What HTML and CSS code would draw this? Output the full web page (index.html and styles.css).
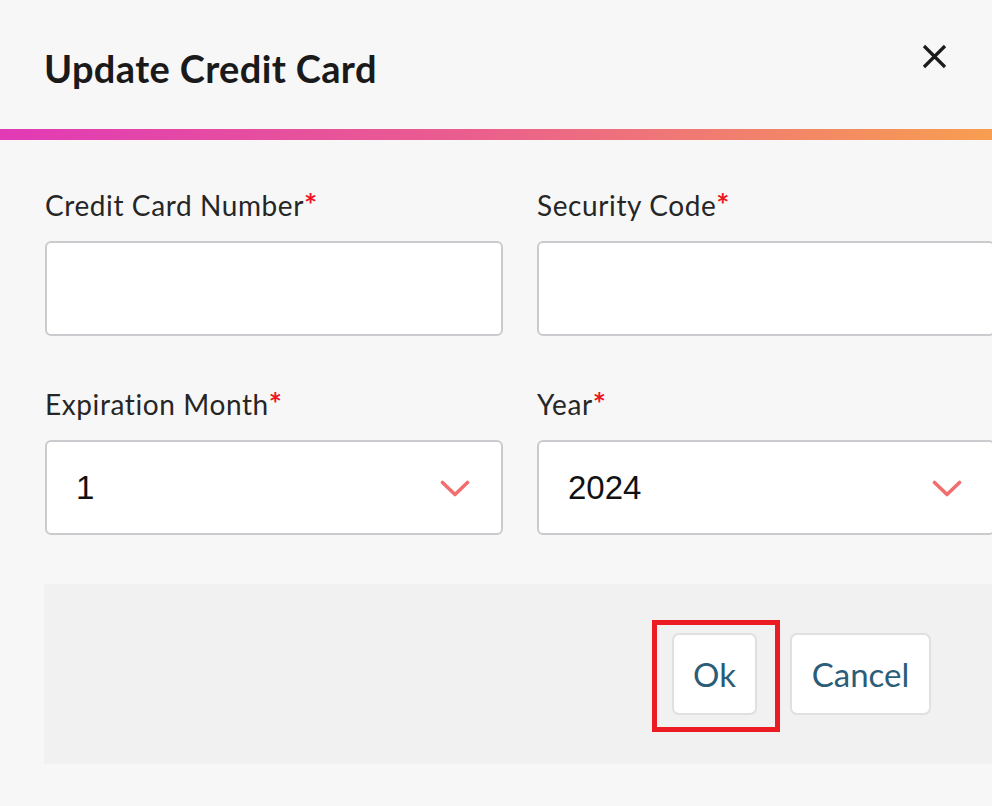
FILE: index.html
```html
<!DOCTYPE html>
<html lang="en">
<head>
<meta charset="utf-8">
<title>Update Credit Card</title>
<link rel="stylesheet" href="styles.css">
</head>
<body>
<div class="dialog">
  <header class="dialog-header">
    <h1 class="dialog-title">Update Credit Card</h1>
    <button class="close-btn" aria-label="Close">
      <svg viewBox="0 0 25 25" width="25" height="25"><path d="M2 2 L23 23 M23 2 L2 23" stroke="#1b1b1b" stroke-width="3.2" fill="none"/></svg>
    </button>
  </header>
  <div class="accent-bar"></div>
  <form class="dialog-body">
    <div class="field-grid">
      <div class="field">
        <label class="field-label">Credit Card Number<span class="req">*</span></label>
        <div class="input"></div>
      </div>
      <div class="field">
        <label class="field-label">Security Code<span class="req">*</span></label>
        <div class="input"></div>
      </div>
      <div class="field">
        <label class="field-label">Expiration Month<span class="req">*</span></label>
        <div class="input select">
          <span class="select-value">1</span>
          <svg class="chevron" viewBox="0 0 30 18" width="30" height="18"><path d="M2.5 2.5 L15 14.5 L27.5 2.5" stroke="#f26d6d" stroke-width="3.6" fill="none" stroke-linecap="round" stroke-linejoin="round"/></svg>
        </div>
      </div>
      <div class="field">
        <label class="field-label">Year<span class="req">*</span></label>
        <div class="input select">
          <span class="select-value">2024</span>
          <svg class="chevron" viewBox="0 0 30 18" width="30" height="18"><path d="M2.5 2.5 L15 14.5 L27.5 2.5" stroke="#f26d6d" stroke-width="3.6" fill="none" stroke-linecap="round" stroke-linejoin="round"/></svg>
        </div>
      </div>
    </div>
    <div class="dialog-footer">
      <div class="btn-wrap">
        <button type="button" class="btn">Ok</button>
        <span class="highlight"></span>
      </div>
      <button type="button" class="btn btn-cancel">Cancel</button>
    </div>
  </form>
</div>
</body>
</html>
```
FILE: styles.css
```css
html, body {
  margin: 0;
  padding: 0;
}
body {
  background: #f7f7f7;
  overflow: hidden;
  font-family: "Lato", "Noto Sans", sans-serif;
  color: #262626;
}
.dialog {
  width: 1040px;
  background: #f7f7f7;
}
.dialog-header {
  height: 129px;
  box-sizing: border-box;
  display: flex;
  justify-content: space-between;
  align-items: flex-start;
  padding: 0 93px 0 44px;
}
.dialog-title {
  margin: 46px 0 0;
  font-size: 38px;
  line-height: 44px;
  font-weight: 700;
  color: #1a1a1a;
  letter-spacing: 0.35px;
}
.close-btn {
  margin-top: 44px;
  padding: 0;
  border: 0;
  background: transparent;
  width: 25px;
  height: 25px;
  display: block;
}
.close-btn svg { display: block; }
.accent-bar {
  height: 11px;
  background: linear-gradient(90deg, #e13ab6 0%, #ea5e8e 45%, #f9a44a 100%);
}
.dialog-body {
  padding: 0 45px;
  margin: 0;
}
.field-grid {
  display: grid;
  grid-template-columns: 458px 458px;
  column-gap: 34px;
  row-gap: 51px;
  padding-top: 48px;
}
.field {
  display: flex;
  flex-direction: column;
}
.field-label {
  font-size: 28px;
  line-height: 34px;
  color: #262626;
  margin-bottom: 19px;
  letter-spacing: 0.6px;
}
.req {
  color: #f0141e;
  font-weight: 700;
  font-size: 31px;
  line-height: 0;
  letter-spacing: 0;
}
.input {
  height: 95px;
  box-sizing: border-box;
  background: #fff;
  border: 2px solid #cbcbcf;
  border-radius: 6px;
}
.select {
  display: flex;
  align-items: center;
  justify-content: space-between;
  padding: 0 31px 0 29px;
}
.select-value {
  font-family: "Liberation Sans", Arial, sans-serif;
  font-size: 33px;
  color: #111;
}
.chevron { display: block; margin-top: 2px; }
.dialog-footer {
  margin: 49px -1px 0;
  height: 180px;
  box-sizing: border-box;
  background: #f1f1f1;
  display: flex;
  justify-content: flex-end;
  align-items: center;
  gap: 33px;
  padding-right: 65px;
}
.btn-wrap {
  position: relative;
  display: flex;
}
.btn {
  height: 82px;
  box-sizing: border-box;
  background: #fff;
  border: 2px solid #e0e0e0;
  border-radius: 7px;
  font-family: "Lato", "Noto Sans", sans-serif;
  font-size: 33px;
  color: #2b5d79;
  width: 85px;
  padding: 0;
}
.btn-cancel { width: 141px; }
.highlight {
  position: absolute;
  left: -20px;
  top: -13px;
  width: 128px;
  height: 112px;
  box-sizing: border-box;
  border: 5px solid #ec1c24;
  pointer-events: none;
}
```
